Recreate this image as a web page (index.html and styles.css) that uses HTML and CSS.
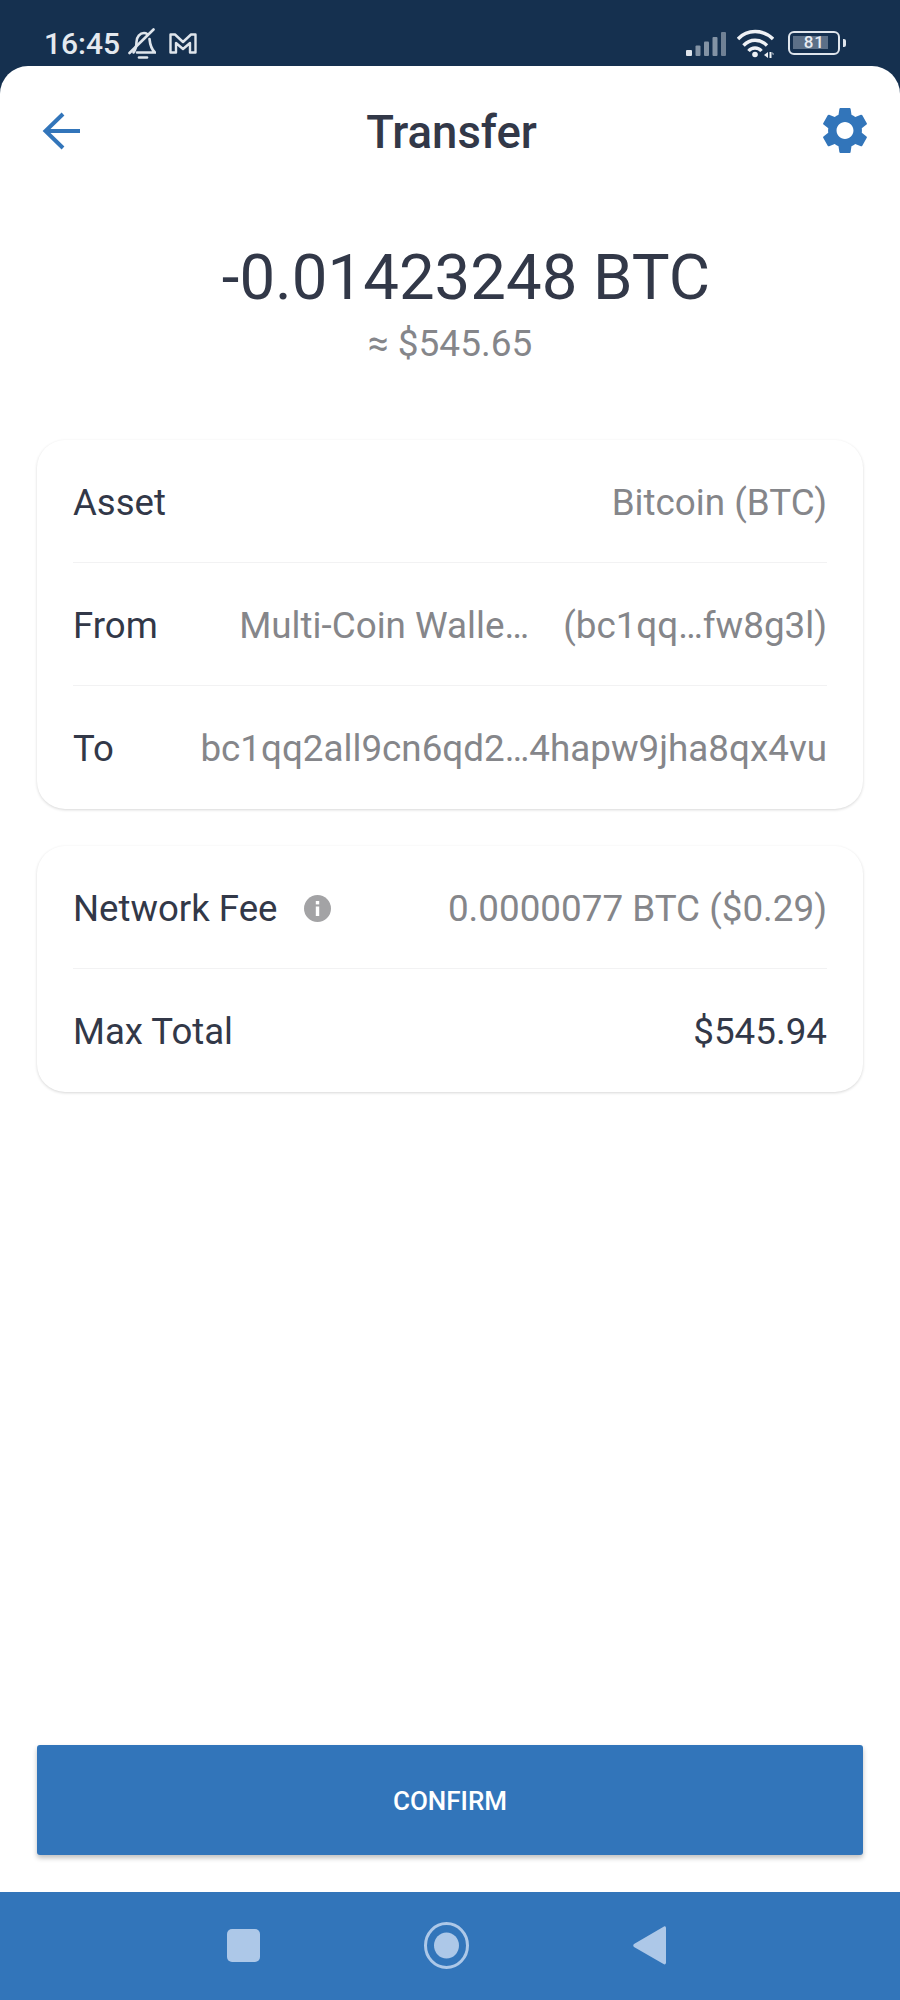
FILE: index.html
```html
<!DOCTYPE html>
<html lang="en">
<head>
    <meta charset="UTF-8">
    <meta name="viewport" content="width=device-width, initial-scale=1.0">
    <title>Transfer</title>
    <link rel="stylesheet" href="styles.css">
</head>
<body>
    <!-- Status bar -->
    <div class="status-bar">
        <div class="status-left">
            <span class="clock">16:45</span>
            <svg class="bell" width="28" height="31" viewBox="0 0 28 31" fill="none" stroke="#dfe5ec" stroke-width="2.600" stroke-linecap="round">
                <path d="M1.500 25 L25.500 1.500"/>
                <path d="M5.500 24.500 C8 21 8.500 18 8.500 14 C8.500 9 12 5 16 5 C17.500 5 18.500 5.500 19.500 6.200"/>
                <path d="M21.500 11 C22 16 23 21 27 24.500 H9"/>
                <path d="M11 29.500 H19"/>
            </svg>
            <svg class="mail" width="28" height="21" viewBox="0 0 28 21" fill="none" stroke="#dfe5ec" stroke-width="2.400" stroke-linejoin="round">
                <path d="M1.500 1.500 H6 L14 9 L22 1.500 H26.500 V19.500 H21 V10 L14 16 L7 10 V19.500 H1.500 Z"/>
            </svg>
        </div>
        <div class="status-right">
            <svg class="signal" width="40" height="24" viewBox="0 0 40 24" fill="#dfe5ec">
                <rect x="0" y="18" width="6" height="6" rx="1"/>
                <rect x="9.500" y="13.500" width="5" height="10.500" rx="1" opacity="0.55"/>
                <rect x="18" y="9.500" width="5" height="14.500" rx="1" opacity="0.55"/>
                <rect x="26.500" y="5" width="5" height="19" rx="1" opacity="0.55"/>
                <rect x="35" y="0" width="5" height="24" rx="1" opacity="0.45"/>
            </svg>
            <svg class="wifi" width="37" height="29" viewBox="0 0 37 29" fill="none" stroke="#eef1f5" stroke-width="3.400">
                <path d="M1 10 C10 0 26 0 36 10"/>
                <path d="M6.500 16.500 C13 9.500 23 9.500 30 16.500"/>
                <path d="M11.500 22 C15 18 21 18 24.500 22"/>
                <circle cx="18" cy="25.500" r="2.800" fill="#eef1f5" stroke="none"/>
                <path d="M31 23 L27 26 L31 29 Z M32.500 23 H34.500 V29 H32.500 Z M35.500 23 L37 25.500 H35.500 Z" fill="#eef1f5" stroke="none"/>
            </svg>
            <div class="battery">
                <div class="battery-body">
                    <span class="battery-fill">81</span>
                </div>
                <div class="battery-tip"></div>
            </div>
        </div>
    </div>

    <div class="sheet">
        <div class="top-bar">
            <svg width="38" height="38" viewBox="0 0 38 38" fill="none" stroke="#3275ba" stroke-width="4">
                <path d="M38 19 H4"/>
                <path d="M21 2 L3.500 19 L21 36"/>
            </svg>
            <h1>Transfer</h1>
            <svg width="44" height="47" viewBox="2.700 2 18.600 20" fill="#3275ba">
                <path d="M19.140 12.940c.04-.3.060-.61.060-.94 0-.32-.02-.64-.07-.94l2.030-1.580c.18-.14.230-.41.120-.61l-1.920-3.320c-.12-.22-.37-.29-.59-.22l-2.390.96c-.5-.38-1.030-.7-1.620-.94l-.36-2.540c-.04-.24-.24-.41-.48-.41h-3.840c-.24 0-.43.170-.47.410l-.36 2.540c-.59.240-1.130.57-1.620.94l-2.390-.96c-.22-.08-.47 0-.59.220L2.740 8.870c-.12.210-.08.470.12.610l2.030 1.580c-.05.3-.09.630-.09.940s.02.640.07.940l-2.030 1.580c-.18.140-.23.410-.12.610l1.920 3.320c.12.220.37.290.59.220l2.390-.96c.5.380 1.030.7 1.620.94l.36 2.540c.05.240.24.410.48.410h3.840c.24 0 .44-.17.470-.41l.36-2.540c.59-.24 1.130-.56 1.620-.94l2.390.96c.22.080.47 0 .59-.22l1.920-3.320c.12-.22.070-.47-.12-.61l-2.010-1.580zM12 15.600c-1.980 0-3.600-1.620-3.600-3.600s1.620-3.600 3.600-3.600 3.600 1.620 3.600 3.600-1.620 3.600-3.600 3.600z"/>
            </svg>
        </div>

        <div class="amount">
            <div class="amount-crypto">-0.01423248 BTC</div>
            <div class="amount-fiat">≈ $545.65</div>
        </div>

        <div class="card">
            <div class="row">
                <span class="label">Asset</span>
                <span class="value">Bitcoin (BTC)</span>
            </div>
            <div class="row">
                <span class="label">From</span>
                <span class="value from-value"><span>Multi-Coin Walle…</span><span>(bc1qq…fw8g3l)</span></span>
            </div>
            <div class="row">
                <span class="label">To</span>
                <span class="value">bc1qq2all9cn6qd2…4hapw9jha8qx4vu</span>
            </div>
        </div>

        <div class="card card-fees">
            <div class="row">
                <span class="label label-info">Network Fee
                    <svg width="27" height="27" viewBox="0 0 27 27">
                        <circle cx="13.500" cy="13.500" r="13.500" fill="#a3a3a5"/>
                        <rect x="11.800" y="11.500" width="3.400" height="9.500" fill="#fff"/>
                        <rect x="11.800" y="6" width="3.400" height="3.400" fill="#fff"/>
                    </svg>
                </span>
                <span class="value">0.0000077 BTC ($0.29)</span>
            </div>
            <div class="row">
                <span class="label">Max Total</span>
                <span class="value value-dark">$545.94</span>
            </div>
        </div>

        <button class="confirm" type="button">CONFIRM</button>
    </div>

    <!-- Android nav bar -->
    <div class="nav-bar">
        <svg width="33" height="33" viewBox="0 0 33 33"><rect width="33" height="33" rx="5" fill="#adc8e8"/></svg>
        <svg width="45" height="47" viewBox="0 0 45 47">
            <ellipse cx="22.500" cy="23.500" rx="21" ry="22" fill="none" stroke="#adc8e8" stroke-width="3"/>
            <ellipse cx="22.500" cy="23.500" rx="12.500" ry="13" fill="#adc8e8"/>
        </svg>
        <svg width="33" height="39" viewBox="0 0 33 39"><path d="M31 .5 C32.500 0 33 1 33 2.500 V36.500 C33 38 32 39 30.500 38 L1 21 C0 20 0 19 1 18 Z" fill="#adc8e8"/></svg>
    </div>
</body>
</html>
```

FILE: styles.css
```css
* {
    box-sizing: border-box;
}
body {
    font-family: Roboto, sans-serif;
    background-color: #15304f;
    margin: 0;
    width: 900px;
    height: 2000px;
    display: flex;
    flex-direction: column;
    overflow: hidden;
}
.status-bar {
    height: 66px;
    flex: none;
    padding: 27px 54px 0 44px;
    display: flex;
    justify-content: space-between;
    color: #e4e9ef;
}
.status-left, .status-right {
    display: flex;
    align-items: flex-start;
}
.clock {
    font-size: 30px;
    line-height: 34px;
    font-weight: 500;
}
.bell {
    margin-left: 8px;
    margin-top: 1px;
}
.mail {
    margin-left: 13px;
    margin-top: 6px;
}
.signal {
    margin-top: 5px;
}
.wifi {
    margin-left: 11px;
    margin-top: 2px;
}
.battery {
    margin-left: 14px;
    margin-top: 4px;
    display: flex;
    align-items: center;
}
.battery-body {
    width: 52px;
    height: 24px;
    border: 2.5px solid #dfe5ec;
    border-radius: 6px;
    padding: 3px 10px 3px 3px;
}
.battery-fill {
    display: block;
    height: 13px;
    padding-right: 3px;
    background: #5c7088;
    color: #e9edf2;
    font-size: 17px;
    line-height: 13px;
    font-weight: 500;
    text-align: right;
    letter-spacing: 1px;
}
.battery-tip {
    width: 3px;
    height: 8px;
    margin-left: 3px;
    background: #dfe5ec;
    border-radius: 0 2px 2px 0;
}
.sheet {
    flex: 1;
    background: #fff;
    border-radius: 28px 28px 0 0;
    padding: 0 37px;
    display: flex;
    flex-direction: column;
    color: #323848;
}
.top-bar {
    height: 129px;
    flex: none;
    margin: 0 -4px 0 5px;
    display: flex;
    align-items: center;
    justify-content: space-between;
}
h1 {
    margin: 5px 0 0;
    font-size: 45.500px;
    font-weight: 500;
    line-height: 52px;
}
.amount {
    text-align: center;
    margin-top: 48px;
}
.amount-crypto {
    font-size: 63.500px;
    line-height: 70px;
    padding-left: 32px;
}
.amount-fiat {
    font-size: 37px;
    line-height: 40px;
    color: #85868a;
    margin-top: 11px;
}
.card {
    margin-top: 76px;
    background: #fff;
    border-radius: 28px;
    box-shadow: 0 1px 3px rgba(0, 0, 0, 0.16);
}
.card-fees {
    margin-top: 37px;
}
.row {
    height: 123px;
    margin: 0 36px;
    padding-top: 2px;
    display: flex;
    align-items: center;
    justify-content: space-between;
    border-bottom: 1px solid #f2f2f3;
    font-size: 36.600px;
}
.row:last-child {
    border-bottom: none;
}
.label-info {
    display: flex;
    align-items: center;
    gap: 27px;
}
.value {
    color: #85868a;
    font-size: 36.800px;
}
.value-dark {
    color: #323848;
}
.from-value {
    display: flex;
    gap: 34px;
}
.confirm {
    margin-top: auto;
    margin-bottom: 37px;
    height: 110px;
    flex: none;
    border: none;
    border-radius: 3px;
    padding-top: 3px;
    background: #3275ba;
    color: #fff;
    font-family: Roboto, sans-serif;
    font-size: 26px;
    font-weight: 500;
    box-shadow: 0 3px 5px rgba(0, 0, 0, 0.25);
}
.nav-bar {
    height: 108px;
    flex: none;
    background: #3275ba;
    display: flex;
    align-items: center;
    justify-content: center;
    gap: 164px;
    padding: 0 7px 2px 0;
}
```
